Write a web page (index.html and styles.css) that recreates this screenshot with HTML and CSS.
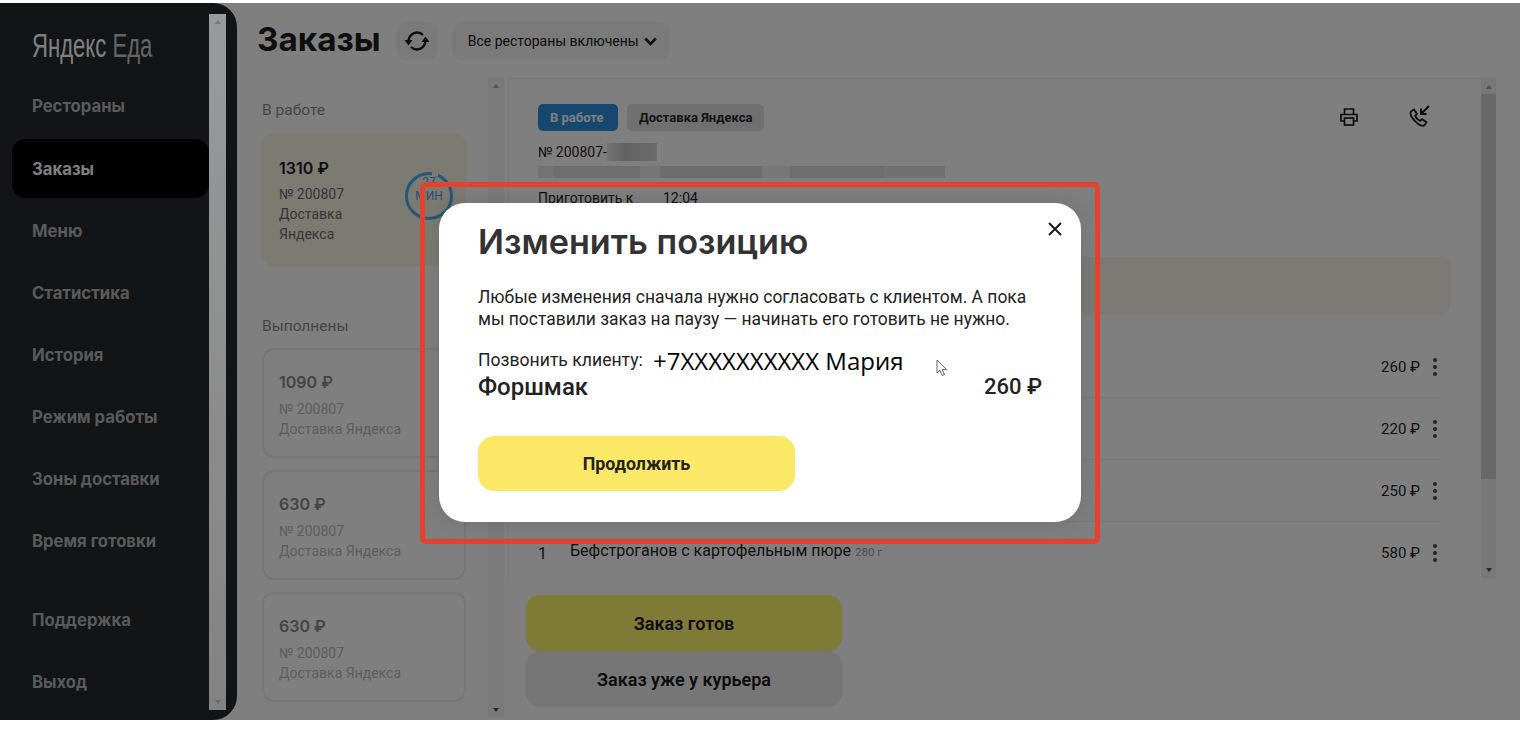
FILE: index.html
```html
<!DOCTYPE html>
<html lang="ru">
<head>
    <meta charset="UTF-8">
    <meta name="viewport" content="width=device-width, initial-scale=1.0">
    <title>Яндекс Еда - Заказы</title>
    <link rel="stylesheet" href="styles.css">
</head>
<body>
    <div class="screen">
        <aside class="sidebar">
            <div class="sidebar-inner">
                <div class="logo"><span>Яндекс <em>Еда</em></span></div>
                <nav class="nav">
                    <a class="nav-item">Рестораны</a>
                    <a class="nav-item active">Заказы</a>
                    <a class="nav-item">Меню</a>
                    <a class="nav-item">Статистика</a>
                    <a class="nav-item">История</a>
                    <a class="nav-item">Режим работы</a>
                    <a class="nav-item">Зоны доставки</a>
                    <a class="nav-item">Время готовки</a>
                    <a class="nav-item nav-gap">Поддержка</a>
                    <a class="nav-item">Выход</a>
                </nav>
            </div>
        </aside>

        <main class="content">
            <header class="topbar">
                <h1>Заказы</h1>
                <button class="refresh" type="button">
                    <svg width="26" height="22" viewBox="0 0 26 22" fill="none" stroke="#1c1c1c" stroke-width="2.4">
                        <path d="M4.5 10.5C5 6 8.5 2.5 13 2.5C15.5 2.5 17.5 3.5 19 5"/>
                        <path d="M21.5 11.5C21 16 17.5 19.5 13 19.5C10.5 19.5 8.5 18.5 7 17"/>
                        <path d="M0.5 10H8.5L4.5 15.5Z" fill="#1c1c1c" stroke="none"/>
                        <path d="M17.5 12H25.5L21.5 6.5Z" fill="#1c1c1c" stroke="none"/>
                    </svg>
                </button>
                <button class="restaurants" type="button">
                    Все рестораны включены
                    <svg width="13" height="9" viewBox="0 0 13 9" fill="none" stroke="#1a1a1a" stroke-width="2.6"><path d="M1.2 1.5L6.5 7L11.8 1.5"/></svg>
                </button>
            </header>

            <div class="columns">
                <section class="orders">
                    <h2 class="group-title">В работе</h2>
                    <div class="card card-active">
                        <div class="card-sum">1310 ₽</div>
                        <div class="card-info">№ 200807<br>Доставка<br>Яндекса</div>
                        <div class="timer">27<br>мин</div>
                    </div>
                    <h2 class="group-title group-done">Выполнены</h2>
                    <div class="card">
                        <div class="card-sum">1090 ₽</div>
                        <div class="card-info">№ 200807<br>Доставка Яндекса</div>
                    </div>
                    <div class="card">
                        <div class="card-sum">630 ₽</div>
                        <div class="card-info">№ 200807<br>Доставка Яндекса</div>
                    </div>
                    <div class="card">
                        <div class="card-sum">630 ₽</div>
                        <div class="card-info">№ 200807<br>Доставка Яндекса</div>
                    </div>
                    <div class="scrollbar orders-scroll"><i class="arrow-up"></i><i class="arrow-down"></i></div>
                </section>

                <section class="details">
                    <div class="details-box">
                        <div class="details-top">
                            <span class="badge badge-blue">В работе</span>
                            <span class="badge">Доставка Яндекса</span>
                            <div class="details-icons">
                                <svg width="20" height="20" viewBox="0 0 20 20" fill="none" stroke="#1c1c1c" stroke-width="1.7">
                                    <path d="M5.5 7V2H14.5V7"/>
                                    <path d="M5.5 14H2V7.5H18V14H14.5"/>
                                    <rect x="5.5" y="11" width="9" height="7"/>
                                </svg>
                                <svg width="26" height="26" viewBox="0 0 26 26" fill="none" stroke="#1c1c1c" stroke-width="1.8">
                                    <path d="M5 7.5L8 5.5L11 10L9.2 11.8C10 14 12 16.2 14.2 17L16 15.2L20.5 18.2L18.5 21.2C17 22.5 13 21.5 9.5 17.5C5.5 13.5 3.5 9.5 5 7.5Z"/>
                                    <path d="M23 2L15.5 9.5M15 4.5V10H20.5" stroke-width="2"/>
                                </svg>
                            </div>
                        </div>
                        <div class="order-num">№ 200807-<span class="blur-block"></span></div>
                        <div class="blur-line"></div>
                        <div class="cook-time"><span>Приготовить к</span><span>12:04</span></div>
                        <div class="notice"></div>
                        <div class="row"><span class="qty"></span><span class="name"></span><span class="price">260 ₽</span><span class="dots"><i></i><i></i><i></i></span></div>
                        <div class="row"><span class="qty"></span><span class="name"></span><span class="price">220 ₽</span><span class="dots"><i></i><i></i><i></i></span></div>
                        <div class="row"><span class="qty"></span><span class="name"></span><span class="price">250 ₽</span><span class="dots"><i></i><i></i><i></i></span></div>
                        <div class="row row-last"><span class="qty">1</span><span class="name">Бефстроганов с картофельным пюре <small>280 г</small></span><span class="price">580 ₽</span><span class="dots"><i></i><i></i><i></i></span></div>
                        <div class="scrollbar details-scroll"><b></b><i class="arrow-up"></i><i class="arrow-down"></i></div>
                    </div>
                    <div class="actions">
                        <button class="action action-ready" type="button">Заказ готов</button>
                        <button class="action" type="button">Заказ уже у курьера</button>
                    </div>
                </section>
            </div>
        </main>

        <div class="overlay">
            <div class="red-frame">
                <div class="modal">
                    <button class="close" type="button">
                        <svg width="16" height="16" viewBox="0 0 16 16" stroke="#1a1a1a" stroke-width="2"><path d="M2 2L14 14M14 2L2 14"/></svg>
                    </button>
                    <h2 class="modal-title">Изменить позицию</h2>
                    <p class="modal-text">Любые изменения сначала нужно согласовать с клиентом. А пока<br>мы поставили заказ на паузу — начинать его готовить не нужно.</p>
                    <div class="call"><span class="call-label">Позвонить клиенту:</span><span class="call-phone">+7XXXXXXXXXX Мария</span></div>
                    <div class="position"><span class="position-name">Форшмак</span><span>260 ₽</span></div>
                    <button class="modal-button" type="button">Продолжить</button>
                    <svg class="cursor" width="12" height="18" viewBox="0 0 12 18" fill="#fff" stroke="#666" stroke-width="1"><path d="M1 1V14L4 11.2L6.2 16.5L8.4 15.5L6.2 10.5H10.5Z"/></svg>
                </div>
            </div>
        </div>

        <div class="scrollbar sidebar-scroll"><i class="arrow-up"></i><i class="arrow-down"></i></div>
    </div>
</body>
</html>
```
FILE: styles.css
```css
* {
    box-sizing: border-box;
}
html, body {
    margin: 0;
    height: 100%;
    overflow: hidden;
    background: #fff;
}
body {
    font-family: Roboto, Arial, sans-serif;
    color: #1f1f1f;
}
button {
    font-family: inherit;
    border: none;
    cursor: pointer;
}
.screen {
    position: relative;
    display: flex;
    margin-top: 3px;
    height: 717px;
    background: #fff;
    overflow: hidden;
}

/* sidebar */
.sidebar {
    position: relative;
    flex: 0 0 237px;
    background: #26282d;
    border-radius: 0 24px 24px 0;
}
.sidebar-inner {
    width: 209px;
    padding-left: 12px;
}
.logo {
    height: 72px;
    padding: 22px 0 0 20px;
    white-space: nowrap;
}
.logo span {
    display: inline-block;
    font-family: "Liberation Sans", Arial, sans-serif;
    font-size: 34px;
    line-height: 40px;
    color: #fff;
    transform: scaleX(.65);
    transform-origin: left center;
}
.logo em {
    font-style: normal;
    color: #c9c9c9;
}
.nav {
    display: flex;
    flex-direction: column;
}
.nav-item {
    display: flex;
    align-items: center;
    height: 62px;
    padding-left: 20px;
    font-family: Inter, Arial, sans-serif;
    font-size: 16.7px;
    font-weight: 700;
    color: #b4b4b4;
}
.nav-item.active {
    height: 59px;
    margin: 2px 0 2px;
    color: #fff;
    background: #000;
    border-radius: 14px;
}
.nav-gap {
    margin-top: 17px;
}

/* scrollbars */
.scrollbar {
    position: absolute;
    background: #f1f1f1;
}
.scrollbar b {
    position: absolute;
    left: 0;
    right: 0;
    top: 15px;
    height: 385px;
    background: #d0d0d0;
}
.scrollbar i {
    position: absolute;
    left: 50%;
    margin-left: -3px;
    border-left: 3px solid transparent;
    border-right: 3px solid transparent;
}
.arrow-up {
    top: 6px;
    border-bottom: 4px solid #a8a8a8;
}
.arrow-down {
    bottom: 6px;
    border-top: 4px solid #505050;
}
.sidebar-scroll {
    z-index: 2;
    left: 209px;
    top: 11px;
    width: 17px;
    height: 696px;
    background: linear-gradient(#999a9b, #838383);
}
.sidebar-scroll i {
    border-bottom-color: #777;
    border-top-color: #666;
}

/* main */
.content {
    flex: 1;
    min-width: 0;
    padding: 19px 0 0 21px;
}
.topbar {
    display: flex;
    align-items: center;
    height: 38px;
}
.topbar h1 {
    margin: 0 15px 4px -1px;
    font-family: Inter, Arial, sans-serif;
    font-size: 33.3px;
    font-weight: 700;
    color: #1f1f1f;
}
.refresh {
    display: flex;
    align-items: center;
    justify-content: center;
    width: 42px;
    height: 38px;
    margin-right: 14px;
    padding: 0;
    background: #f4f4f4;
    border-radius: 10px;
}
.restaurants {
    display: flex;
    align-items: center;
    gap: 5px;
    width: 218px;
    height: 38px;
    padding-left: 16px;
    font-size: 14px;
    color: #1a1a1a;
    background: #f4f4f4;
    border-radius: 10px;
}
.columns {
    display: flex;
    margin-top: 18px;
}

/* order list */
.orders {
    position: relative;
    flex: 0 0 250px;
    height: 640px;
    padding-left: 4px;
}
.group-title {
    margin: 0;
    padding-top: 23px;
    height: 55px;
    font-size: 15.5px;
    font-weight: 400;
    color: #8a8a8a;
}
.group-done {
    margin-top: 30px;
    height: 52px;
    padding-top: 21px;
}
.card {
    position: relative;
    width: 204px;
    height: 110px;
    margin-bottom: 12px;
    padding: 22px 15px;
    border: 2px solid #eee;
    border-radius: 12px;
    color: #888;
}
.card-active {
    height: 133px;
    margin-bottom: 0;
    border: none;
    padding: 25px 17px;
    background: #f8f6e4;
    color: #6d6d6d;
}
.card-sum {
    font-family: Inter, Arial, sans-serif;
    font-size: 16px;
    font-weight: 600;
    color: #8a8a8a;
}
.card-active .card-sum {
    color: #1f1f1f;
}
.card-info {
    margin-top: 7px;
    font-size: 14px;
    line-height: 20px;
    color: #bbb;
}
.card-active .card-info {
    margin-top: 6px;
    color: #6d6d6d;
}
.timer {
    position: absolute;
    left: 143px;
    top: 39px;
    width: 48px;
    height: 48px;
    border: 3px solid #46b0f0;
    border-radius: 50%;
    font-size: 12px;
    line-height: 14px;
    text-align: center;
    color: #46a0e0;
    text-transform: uppercase;
}
.timer::before {
    content: "";
    position: absolute;
    left: 24px;
    top: -4px;
    width: 6px;
    height: 5px;
    background: #f8f6e4;
}
.orders-scroll {
    left: 230px;
    top: 0;
    width: 16px;
    height: 640px;
    background: #f4f4f4;
}

/* order details */
.details {
    position: relative;
    flex: 0 0 989px;
}
.details-box {
    position: relative;
    height: 500px;
    padding: 25px 0 0 29px;
    border-top: 1px solid #f0f0f0;
    border-left: 1px solid #f0f0f0;
}
.details-top {
    display: flex;
    align-items: center;
    gap: 9px;
}
.badge {
    display: flex;
    align-items: center;
    height: 27px;
    padding: 0 12px;
    font-size: 13px;
    font-weight: 700;
    color: #2a2a2a;
    background: #e0e0e0;
    border-radius: 5px;
}
.badge-blue {
    width: 80px;
    color: #fff;
    background: #2d8fdc;
}
.details-icons {
    display: flex;
    align-items: center;
    gap: 47px;
    position: absolute;
    left: 830px;
    top: 25px;
}
.order-num {
    display: flex;
    align-items: center;
    height: 18px;
    margin-top: 12px;
    font-size: 14px;
}
.blur-block {
    width: 50px;
    height: 18px;
    background: linear-gradient(90deg, #e8e8e8, #c4c4c4 35%, #cfcfcf 65%, #d8d8d8);
}
.blur-line {
    width: 407px;
    height: 12px;
    margin-top: 5px;
    background: linear-gradient(90deg, #e6e6e6 0 4%, #dcdcdc 4% 25%, #ececec 25% 30%, #dadada 30% 55%, #eeeeee 55% 62%, #dcdcdc 62% 85%, #e2e2e2 85%);
}
.cook-time {
    display: flex;
    margin-top: 11px;
    font-size: 14px;
    line-height: 18px;
}
.cook-time span:first-child {
    width: 125px;
}
.notice {
    width: 930px;
    height: 58px;
    margin: 50px 0 21px -18px;
    background: #f6f5e8;
    border-radius: 8px;
}
.row {
    display: flex;
    align-items: center;
    width: 902px;
    height: 62px;
    padding-right: 3px;
    border-bottom: 1px solid #f0f0f0;
    font-size: 15px;
}
.row-last {
    border-bottom: none;
}
.qty {
    flex: 0 0 32px;
    font-size: 16px;
}
.name {
    flex: 1;
    margin-bottom: 6px;
    font-size: 16px;
}
.name small {
    font-size: 11.5px;
    color: #999;
}
.price {
    font-size: 15px;
}
.dots {
    display: flex;
    flex-direction: column;
    gap: 3px;
    margin-left: 13px;
    width: 4px;
}
.dots i {
    width: 4px;
    height: 4px;
    border-radius: 50%;
    background: #4a4a4a;
}
.details-scroll {
    left: 972px;
    top: 0;
    width: 15px;
    height: 499px;
}
.actions {
    width: 316px;
    margin: 17px 0 0 18px;
}
.action {
    display: block;
    width: 100%;
    height: 56px;
    font-size: 18px;
    font-weight: 600;
    color: #1a1a1a;
    background: #ececec;
    border-radius: 14px;
}
.action-ready {
    background: #fff46c;
}

/* dialog */
.overlay {
    position: absolute;
    inset: 0;
    display: flex;
    align-items: center;
    justify-content: center;
    padding-top: 3px;
    background: rgba(0, 0, 0, .5);
}
.red-frame {
    padding: 16px 14px 17px;
    border: 5px solid #e8402f;
    border-radius: 6px;
}
.modal {
    position: relative;
    width: 642px;
    height: 319px;
    padding: 17px 39px 0;
    color: #222;
    background: #fff;
    border-radius: 26px;
    box-shadow: 0 0 20px rgba(0, 0, 0, .12);
}
.close {
    position: absolute;
    right: 18px;
    top: 18px;
    padding: 0;
    line-height: 0;
    background: none;
}
.modal-title {
    margin: 0;
    font-family: Inter, Arial, sans-serif;
    font-size: 34.2px;
    line-height: 44px;
    font-weight: 600;
    color: #333;
}
.modal-text {
    margin: 22px 0 0;
    font-size: 17.45px;
    line-height: 22px;
}
.call {
    display: flex;
    align-items: center;
    height: 26px;
    margin-top: 17px;
    font-size: 17.6px;
}
.call-label {
    width: 175px;
    flex: none;
}
.call-phone {
    font-family: "Open Sans", sans-serif;
    font-size: 24px;
    color: #000;
}
.position {
    display: flex;
    justify-content: space-between;
    width: 564px;
    font-size: 22px;
    line-height: 28px;
    font-weight: 500;
}
.position-name {
    font-size: 24px;
}
.modal-button {
    display: block;
    width: 317px;
    height: 55px;
    margin-top: 35px;
    font-size: 17.8px;
    font-weight: 700;
    color: #222;
    background: #fae866;
    border-radius: 16px;
}
.cursor {
    position: absolute;
    left: 497px;
    top: 156px;
}
```
